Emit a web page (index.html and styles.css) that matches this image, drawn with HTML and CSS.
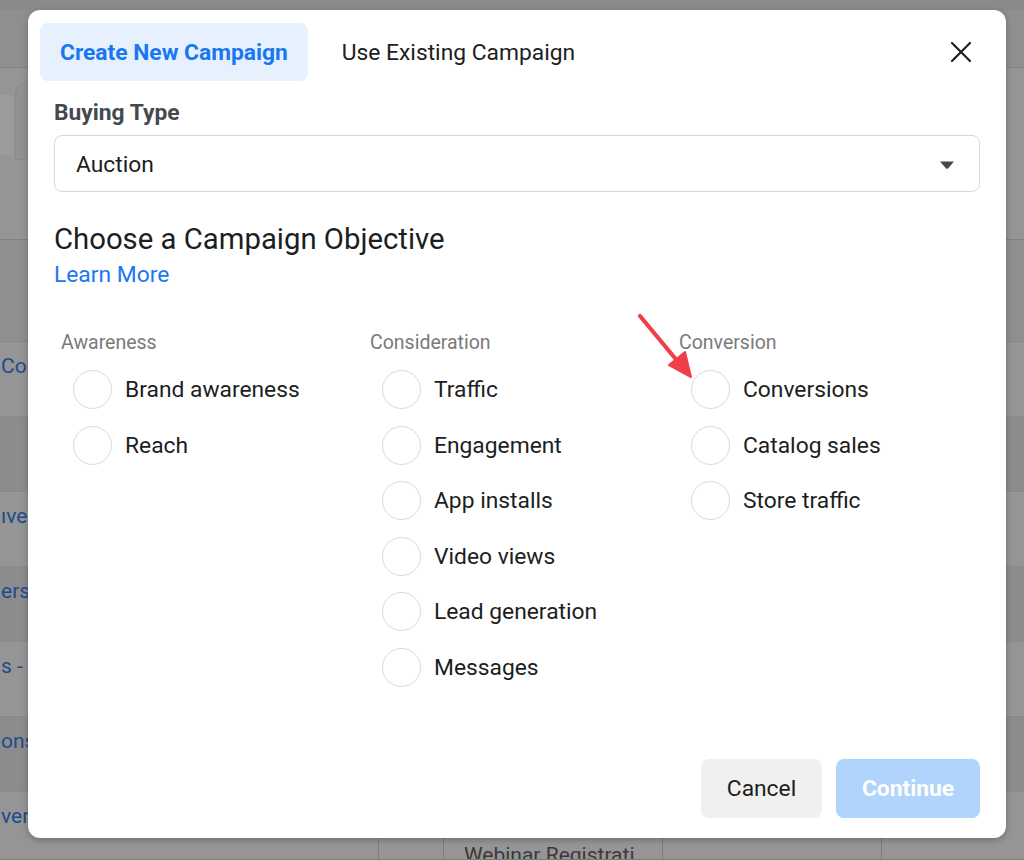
FILE: index.html
```html
<!DOCTYPE html>
<html>
<head>
<meta charset="utf-8">
<link rel="stylesheet" href="styles.css">
</head>
<body>
<div class="backdrop">
  <div class="bg-top"></div>
  <div class="bg-head"></div>
  <div class="bg-toolbar">
    <div class="bg-chip"></div>
    <div class="bg-tab"></div>
  </div>
  <div class="bg-gap"></div>
  <div class="bg-table">
    <div class="bg-row light"><span class="bg-link">Cor</span></div>
    <div class="bg-row dark"></div>
    <div class="bg-row light"><span class="bg-link">ıve</span></div>
    <div class="bg-row dark"><span class="bg-link">ers</span></div>
    <div class="bg-row light"><span class="bg-link">s -</span></div>
    <div class="bg-row dark"><span class="bg-link">ons</span></div>
    <div class="bg-row light last"><span class="bg-link">ver</span><span class="bg-cell">Webinar Registrati</span></div>
    <div class="vline v1"></div>
    <div class="vline v2"></div>
    <div class="vline v3"></div>
    <div class="vline v4"></div>
  </div>
</div>

<div class="modal">
  <div class="modal-head">
    <div class="tab active">Create New Campaign</div>
    <div class="tab">Use Existing Campaign</div>
    <div class="close">
      <svg width="22" height="22" viewBox="0 0 22 22"><path d="M2 2 L20 20 M20 2 L2 20" stroke="#1c1e21" stroke-width="2.2" stroke-linecap="round"/></svg>
    </div>
  </div>
  <div class="modal-body">
    <div class="label">Buying Type</div>
    <div class="select">
      <span>Auction</span>
      <svg width="16" height="10" viewBox="0 0 16 10"><path d="M1 1.5 H15 L9.2 8.2 Q8 9.4 6.8 8.2 Z" fill="#444950"/></svg>
    </div>
    <div class="title">Choose a Campaign Objective</div>
    <div class="learn">Learn More</div>
    <div class="columns">
      <div class="col">
        <div class="col-head">Awareness</div>
        <div class="opt"><span class="radio"></span><span>Brand awareness</span></div>
        <div class="opt"><span class="radio"></span><span>Reach</span></div>
      </div>
      <div class="col">
        <div class="col-head">Consideration</div>
        <div class="opt"><span class="radio"></span><span>Traffic</span></div>
        <div class="opt"><span class="radio"></span><span>Engagement</span></div>
        <div class="opt"><span class="radio"></span><span>App installs</span></div>
        <div class="opt"><span class="radio"></span><span>Video views</span></div>
        <div class="opt"><span class="radio"></span><span>Lead generation</span></div>
        <div class="opt"><span class="radio"></span><span>Messages</span></div>
      </div>
      <div class="col">
        <div class="col-head">Conversion</div>
        <div class="opt"><span class="radio"></span><span>Conversions</span></div>
        <div class="opt"><span class="radio"></span><span>Catalog sales</span></div>
        <div class="opt"><span class="radio"></span><span>Store traffic</span></div>
      </div>
    </div>
  </div>
  <div class="modal-foot">
    <div class="btn cancel">Cancel</div>
    <div class="btn continue">Continue</div>
  </div>
  <svg class="arrow" width="62" height="72" viewBox="0 0 62 72">
    <path d="M4 4 L43 51" stroke="#ef3f48" stroke-width="4.2" stroke-linecap="round"/>
    <path d="M55 65 L33 53 L49 40 Z" fill="#ef3f48" stroke="#ef3f48" stroke-width="2" stroke-linejoin="round"/>
  </svg>
</div>
</body>
</html>
```

FILE: styles.css
```css
* { box-sizing: border-box; }
html, body { margin: 0; padding: 0; }
body {
  width: 1024px;
  height: 860px;
  overflow: hidden;
  font-family: Roboto, "Liberation Sans", sans-serif;
  background: #8e8e8e;
  position: relative;
}

/* dimmed page behind the dialog */
.backdrop { width: 1024px; height: 860px; overflow: hidden; display: flex; flex-direction: column; }
.bg-top { height: 10px; background: #8a8a8a; flex: none; }
.bg-head { height: 58px; background: #8f8f8f; border-bottom: 1px solid #7f7f7f; flex: none; }
.bg-toolbar { height: 172px; background: #959595; border-bottom: 1px solid #808080; flex: none; display: flex; padding-top: 14px; gap: 2px; }
.bg-chip { width: 13px; height: 60px; margin-top: 13px; background: #9b9b9b; }
.bg-tab { width: 40px; height: 78px; border-radius: 10px 10px 0 0; background: #919191; border: 1px solid #8a8a8a; }
.bg-gap { height: 102px; background: #8f8f8f; border-bottom: 1px solid #858585; flex: none; }
.bg-table { flex: 1; min-height: 0; position: relative; display: flex; flex-direction: column; overflow: hidden; }
.bg-row { height: 75px; flex: none; padding: 12px 0 0 0; border-bottom: 1px solid #888; position: relative; }
.bg-row.last { flex: 1; height: auto; min-height: 0; overflow: hidden; border-bottom: 1px solid #7c7c7c; }
.bg-row.light { background: #959595; }
.bg-row.dark { background: #8c8c8c; }
.bg-link { display: block; margin-left: 1px; font-size: 21px; color: #1f4b8a; line-height: 24px; white-space: nowrap; }
.bg-cell { display: block; margin-left: 464px; font-size: 21px; color: #3a3a3a; line-height: 24px; margin-top: 15px; white-space: nowrap; }
.vline { position: absolute; top: 0; bottom: 0; width: 1px; background: #7c7c7c; }
.v1 { left: 378px; } .v2 { left: 443px; } .v3 { left: 662px; } .v4 { left: 881px; }

/* dialog */
.modal {
  position: absolute;
  left: 28px;
  top: 10px;
  width: 978px;
  height: 828px;
  background: #fff;
  border-radius: 12px;
  box-shadow: 0 2px 6px rgba(0,0,0,0.25);
  display: flex;
  flex-direction: column;
}
.modal-head { display: flex; align-items: center; padding: 13px 12px 0 12px; }
.tab {
  height: 58px;
  padding: 1px 20px 0;
  display: flex;
  align-items: center;
  font-size: 22.8px;
  color: #1c1e21;
  border-radius: 8px;
}
.tab + .tab { margin-left: 14px; }
.tab.active { background: #e7f0fd; color: #1877f2; font-weight: 700; }
.close { margin-left: auto; margin-right: 22px; width: 22px; height: 22px; display: flex; }

.modal-body { padding: 0 26px; flex: 1; }
.label { font-size: 22.8px; font-weight: 700; color: #444950; margin-top: 18px; line-height: 28px; }
.select {
  margin-top: 8px;
  height: 57px;
  border: 1px solid #d6d8db;
  border-radius: 8px;
  display: flex;
  align-items: center;
  justify-content: space-between;
  padding: 2px 24px 0 21px;
  font-size: 22.8px;
  color: #1c1e21;
}
.title { margin-top: 29px; font-size: 29.3px; color: #1c1e21; line-height: 36px; }
.learn { font-size: 22.8px; color: #1877f2; line-height: 30px; margin-top: 3px; }

.columns { display: flex; margin-top: 41px; padding-left: 7px; }
.col { width: 309px; flex: none; }
.col-head { font-size: 19.5px; color: #7a7a7a; line-height: 24px; margin-bottom: 7px; }
.opt { display: flex; align-items: center; height: 55.5px; padding-left: 12px; font-size: 22.8px; color: #1c1e21; }
.radio {
  width: 39px;
  height: 39px;
  border-radius: 50%;
  border: 1.5px solid #d9dadc;
  margin-right: 13px;
  flex: none;
}

.modal-foot { display: flex; justify-content: flex-end; gap: 14px; padding: 0 26px 20px 0; }
.btn {
  height: 59px;
  border-radius: 8px;
  display: flex;
  align-items: center;
  justify-content: center;
  font-size: 22.8px;
}
.cancel { width: 121px; background: #f0f0f0; color: #1c1e21; }
.continue { width: 144px; background: #b0d4fb; color: #fff; font-weight: 700; }

.arrow { position: absolute; left: 608px; top: 302px; }
```
